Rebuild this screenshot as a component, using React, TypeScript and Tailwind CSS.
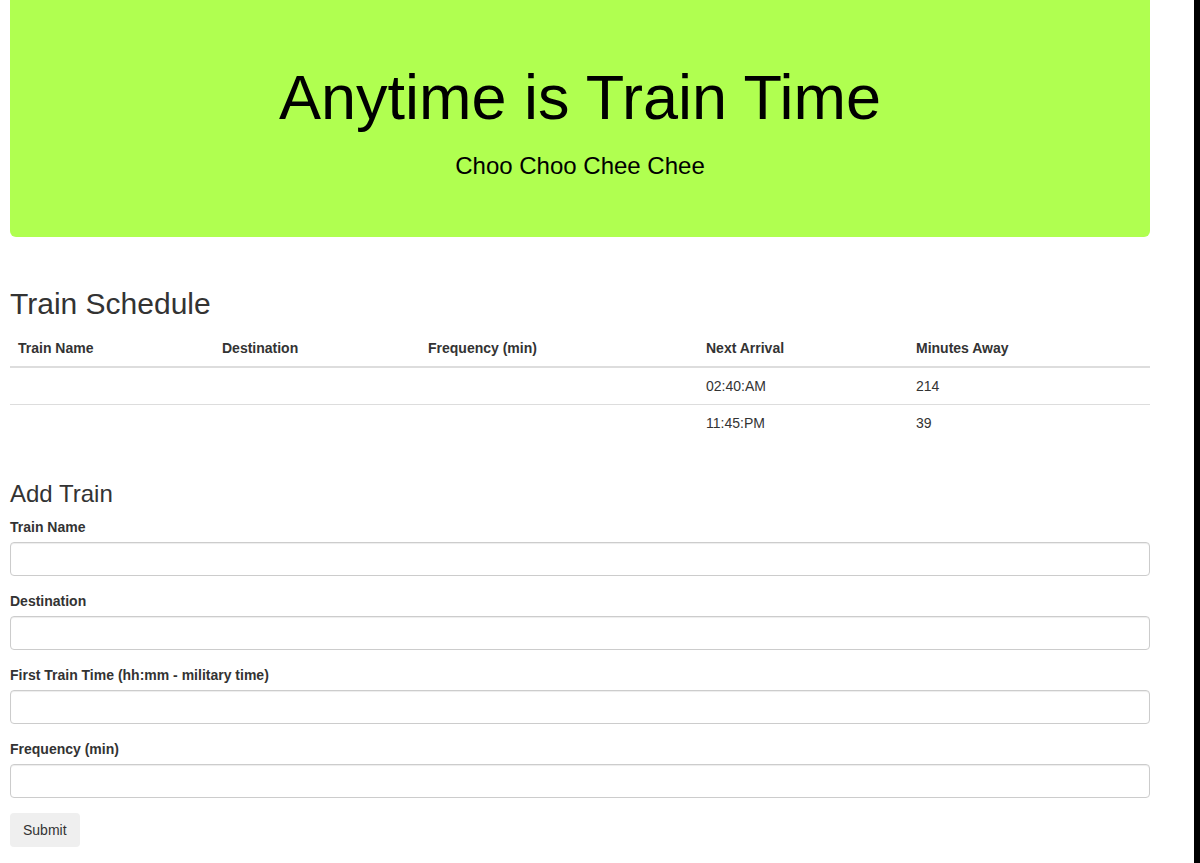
import React from 'react';

const columns = [
  { label: 'Train Name', w: 'w-[204px]' },
  { label: 'Destination', w: 'w-[206px]' },
  { label: 'Frequency (min)', w: 'w-[278px]' },
  { label: 'Next Arrival', w: 'w-[210px]' },
  { label: 'Minutes Away', w: '' },
];

const rows = [
  ['', '', '', '02:40:AM', '214'],
  ['', '', '', '11:45:PM', '39'],
];

const fields = ['Train Name', 'Destination', 'First Train Time (hh:mm - military time)', 'Frequency (min)'];

export default function App() {
  return (
    <div className="flex h-[863px] w-[1200px] overflow-hidden bg-white font-['Liberation_Sans',Arial,sans-serif] text-[14px] leading-[20px] text-[#333]">
      <main className="flex-1 pl-[10px]">
        <div className="w-[1140px]">
          {/* header */}
          <div className="h-[237px] rounded-b-[6px] bg-[#b0ff50] pt-[63px] text-center text-black">
            <h1 className="text-[63px] leading-[69px]">Anytime is Train Time</h1>
            <p className="mt-[19px] text-[24px] leading-[30px]">Choo Choo Chee Chee</p>
          </div>

          <h2 className="mt-[50px] mb-[10px] text-[30px] leading-[33px]">Train Schedule</h2>
          <table className="w-full border-collapse text-left">
            <thead>
              <tr>
                {columns.map((c) => (
                  <th key={c.label} className={`${c.w} border-b-2 border-[#ddd] p-[8px] align-bottom font-bold`}>
                    {c.label}
                  </th>
                ))}
              </tr>
            </thead>
            <tbody>
              {rows.map((r, i) => (
                <tr key={i}>
                  {r.map((cell, j) => (
                    <td key={j} className={`p-[8px] ${i > 0 ? 'border-t border-[#ddd]' : ''}`}>
                      <div className="h-[20px]">{cell}</div>
                    </td>
                  ))}
                </tr>
              ))}
            </tbody>
          </table>

          <h3 className="mt-[40px] mb-[10px] text-[24px] leading-[26.4px]">Add Train</h3>
          <form onSubmit={(e) => e.preventDefault()}>
            {fields.map((f) => (
              <div key={f} className="mb-[15px]">
                <label className="mb-[5px] inline-block font-bold">{f}</label>
                <input
                  type="text"
                  className="block h-[34px] w-full rounded-[4px] border border-[#ccc] px-[12px] py-[6px] shadow-[inset_0_1px_1px_rgba(0,0,0,0.075)] outline-none"
                />
              </div>
            ))}
            <button type="submit" className="h-[34px] rounded-[4px] bg-[#efefef] px-[13px] text-[14px] text-[#333]">
              Submit
            </button>
          </form>
        </div>
      </main>
      <div className="h-full w-[6px] bg-black" />
    </div>
  );
}
